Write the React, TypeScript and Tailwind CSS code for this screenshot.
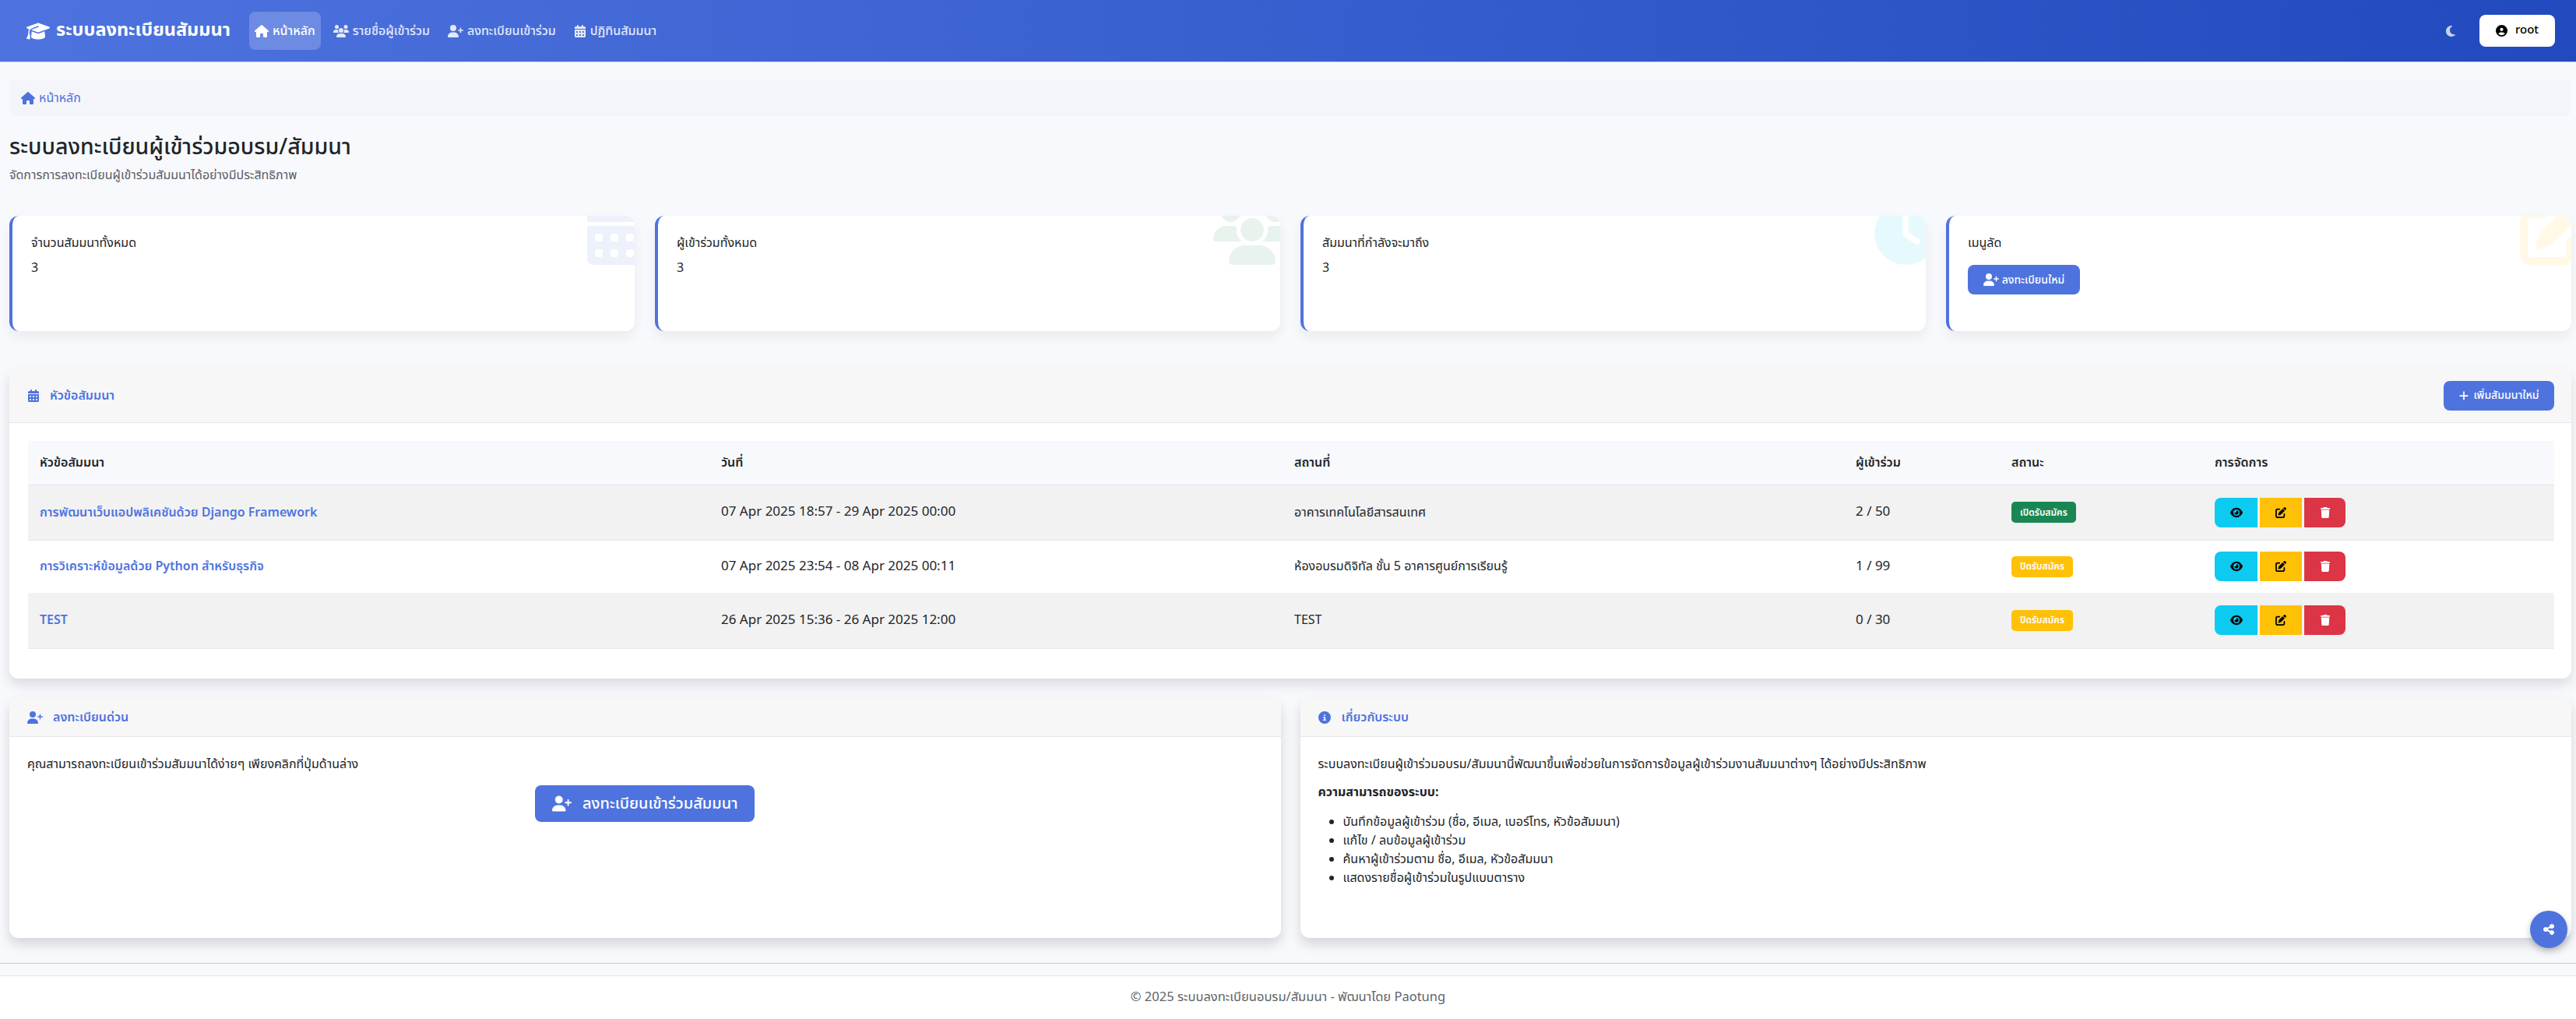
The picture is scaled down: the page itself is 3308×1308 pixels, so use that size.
import React from 'react';
import {
  FaGraduationCap, FaHouse, FaUsers, FaUserPlus, FaCalendarDays, FaMoon, FaCircleUser,
  FaClock, FaPenToSquare, FaEye, FaTrash, FaPlus, FaCircleInfo, FaShareNodes,
} from 'react-icons/fa6';

const seminars = [
  { title: 'การพัฒนาเว็บแอปพลิเคชันด้วย Django Framework', date: '07 Apr 2025 18:57 - 29 Apr 2025 00:00', place: 'อาคารเทคโนโลยีสารสนเทศ', count: '2 / 50', open: true, striped: true, h: 'h-[71px]' },
  { title: 'การวิเคราะห์ข้อมูลด้วย Python สำหรับธุรกิจ', date: '07 Apr 2025 23:54 - 08 Apr 2025 00:11', place: 'ห้องอบรมดิจิทัล ชั้น 5 อาคารศูนย์การเรียนรู้', count: '1 / 99', open: false, striped: false, h: 'h-[68px]' },
  { title: 'TEST', date: '26 Apr 2025 15:36 - 26 Apr 2025 12:00', place: 'TEST', count: '0 / 30', open: false, striped: true, h: 'h-[71px]' },
];

// react-icons draws into a 1em square, so the wide glyphs get a bigger size here
const navItems = [
  { label: 'หน้าหลัก', icon: <FaHouse className="text-[18px]" />, active: true },
  { label: 'รายชื่อผู้เข้าร่วม', icon: <FaUsers className="text-[20px]" />, active: false },
  { label: 'ลงทะเบียนเข้าร่วม', icon: <FaUserPlus className="text-[20px]" />, active: false },
  { label: 'ปฏิทินสัมมนา', icon: <FaCalendarDays className="text-[16px]" />, active: false },
];

const StatCard: React.FC<{ label: string; icon: React.ReactNode; children: React.ReactNode }> = ({ label, icon, children }) => (
  <div className="relative h-[148px] overflow-hidden rounded-[12px] border-l-[4px] border-[#4e73df] bg-white pl-[24px] pt-[23px] shadow-[0_8px_16px_rgba(0,0,0,0.06)]">
    <div className="h-[24px] leading-[24px] text-[#212529]">{label}</div>
    {children}
    {icon}
  </div>
);

const PanelHeader: React.FC<{ icon: React.ReactNode; title: string }> = ({ icon, title }) => (
  <div className="flex h-[50px] items-center border-b border-[#e6e7ea] bg-[#f7f7f8] pl-[23px] font-semibold text-[#4e73df]">
    {icon}
    <span>{title}</span>
  </div>
);

export default function App() {
  return (
    <div className="relative flex min-h-[1308px] flex-col bg-[#f8f9fc] font-['Noto_Sans_Thai','Noto_Sans',sans-serif] text-[16px] text-[#212529]">
      {/* Navbar */}
      <nav className="flex h-[80px] items-center border-b border-[#c5d3f5] bg-gradient-to-r from-[#4e73df] to-[#224abe] pl-[34px] pr-[27px]">
        <div className="flex w-[286px] items-center gap-[8px] text-[23.5px] font-bold text-white">
          <FaGraduationCap className="text-[30px]" />
          <span>ระบบลงทะเบียนสัมมนา</span>
        </div>
        <div className="flex items-center gap-[9px]">
          {navItems.map(item => (
            <div key={item.label} className={`flex h-[49px] items-center gap-[5px] rounded-[8px] px-[7px] font-medium ${item.active ? 'bg-white/20 text-white' : 'text-white/85'}`}>
              {item.icon}
              <span>{item.label}</span>
            </div>
          ))}
        </div>
        <div className="ml-auto flex items-center gap-[29px]">
          <FaMoon className="text-white/75" />
          <div className="flex h-[41px] w-[97px] items-center justify-center gap-[10px] rounded-[8px] bg-white text-[15px] font-medium text-black">
            <FaCircleUser />
            <span>root</span>
          </div>
        </div>
      </nav>

      <main className="pl-[12px] pr-[6px]">
        {/* Breadcrumb */}
        <div className="mt-[22px] flex h-[47px] items-center gap-[5px] rounded-[8px] bg-[#f4f5fa] pl-[15px] text-[#4e73df]">
          <FaHouse className="text-[18px]" />
          <span>หน้าหลัก</span>
        </div>

        <h1 className="mt-[22px] h-[38px] text-[28.5px] font-medium leading-[38px] text-[#212529]">ระบบลงทะเบียนผู้เข้าร่วมอบรม/สัมมนา</h1>
        <p className="mt-[4px] h-[24px] leading-[24px] text-[#5a5c69]">จัดการการลงทะเบียนผู้เข้าร่วมสัมมนาได้อย่างมีประสิทธิภาพ</p>

        {/* Stat cards */}
        <div className="mt-[40px] grid grid-cols-4 gap-[26px]">
          <StatCard label="จำนวนสัมมนาทั้งหมด" icon={<FaCalendarDays className="absolute right-[-14px] top-[-17px] text-[80px] text-[#4e73df]/10" />}>
            <div className="mt-[8px] leading-[24px]">3</div>
          </StatCard>
          <StatCard label="ผู้เข้าร่วมทั้งหมด" icon={<FaUsers className="absolute right-[-14px] top-[-27px] text-[100px] text-[#198754]/10" />}>
            <div className="mt-[8px] leading-[24px]">3</div>
          </StatCard>
          <StatCard label="สัมมนาที่กำลังจะมาถึง" icon={<FaClock className="absolute right-[-14px] top-[-17px] text-[80px] text-[#0dcaf0]/10" />}>
            <div className="mt-[8px] leading-[24px]">3</div>
          </StatCard>
          <StatCard label="เมนูลัด" icon={<FaPenToSquare className="absolute right-[-14px] top-[-17px] text-[80px] text-[#ffc107]/10" />}>
            <button className="mt-[16px] flex h-[38px] w-[144px] items-center justify-center gap-[4px] rounded-[8px] bg-[#4e73df] text-[14px] font-medium text-white">
              <FaUserPlus className="text-[20px]" />
              ลงทะเบียนใหม่
            </button>
          </StatCard>
        </div>

        {/* Seminar table */}
        <section className="mt-[48px] h-[398px] overflow-hidden rounded-[12px] bg-white shadow-[0_8px_16px_rgba(0,0,0,0.12)]">
          <div className="flex h-[70px] items-center justify-between border-b border-[#e6e7ea] bg-[#f7f7f8] pl-[23px] pr-[22px]">
            <div className="flex items-center gap-[13px] font-semibold text-[#4e73df]">
              <FaCalendarDays />
              <span>หัวข้อสัมมนา</span>
            </div>
            <button className="flex h-[38px] w-[142px] items-center justify-center gap-[5px] rounded-[8px] bg-[#4e73df] text-[14px] font-medium text-white">
              <FaPlus className="text-[14px]" />
              เพิ่มสัมมนาใหม่
            </button>
          </div>
          <div className="ml-[24px] mr-[22px] mt-[23px]">
            <table className="w-full table-fixed border-collapse text-left">
              <colgroup>
                <col className="w-[875px]" />
                <col className="w-[736px]" />
                <col className="w-[721px]" />
                <col className="w-[200px]" />
                <col className="w-[261px]" />
                <col />
              </colgroup>
              <thead>
                <tr className="h-[56px] border-b border-[#e3e6f0] bg-[#f8f9fc]">
                  {['หัวข้อสัมมนา', 'วันที่', 'สถานที่', 'ผู้เข้าร่วม', 'สถานะ', 'การจัดการ'].map(h => (
                    <th key={h} className="px-[15px] font-semibold">{h}</th>
                  ))}
                </tr>
              </thead>
              <tbody>
                {seminars.map(s => (
                  <tr key={s.title} className={`${s.h} ${s.striped ? 'border-b border-[#e8e8e8] bg-[#f2f2f2]' : 'bg-white'}`}>
                    <td className="px-[15px] font-semibold text-[#4e73df]">{s.title}</td>
                    <td className="px-[15px] text-[17px]">{s.date}</td>
                    <td className="px-[15px]">{s.place}</td>
                    <td className="px-[15px] text-[17px]">{s.count}</td>
                    <td className="px-[15px]">
                      <span className={`inline-flex h-[27px] items-center rounded-[5px] px-[11px] text-[12px] font-semibold text-white ${s.open ? 'bg-[#198754]' : 'bg-[#ffc107]'}`}>
                        {s.open ? 'เปิดรับสมัคร' : 'ปิดรับสมัคร'}
                      </span>
                    </td>
                    <td className="px-[15px]">
                      <div className="flex gap-[3px]">
                        <button className="flex h-[38px] w-[55px] items-center justify-center rounded-l-[8px] bg-[#0dcaf0] text-black"><FaEye className="text-[16px]" /></button>
                        <button className="flex h-[38px] w-[54px] items-center justify-center bg-[#ffc107] text-black"><FaPenToSquare className="text-[14px]" /></button>
                        <button className="flex h-[38px] w-[53px] items-center justify-center rounded-r-[8px] bg-[#dc3545] text-white"><FaTrash className="text-[14px]" /></button>
                      </div>
                    </td>
                  </tr>
                ))}
              </tbody>
            </table>
          </div>
        </section>

        {/* Bottom panels */}
        <div className="mt-[25px] grid grid-cols-2 gap-[25px]">
          <section className="h-[308px] overflow-hidden rounded-[12px] bg-white shadow-[0_8px_16px_rgba(0,0,0,0.15)]">
            <PanelHeader icon={<FaUserPlus className="mr-[13px] text-[20px]" />} title="ลงทะเบียนด่วน" />
            <div className="px-[23px] pt-[23px]">
              <p className="h-[24px] leading-[24px]">คุณสามารถลงทะเบียนเข้าร่วมสัมมนาได้ง่ายๆ เพียงคลิกที่ปุ่มด้านล่าง</p>
              <div className="mt-[15px] flex justify-center">
                <button className="flex h-[47px] w-[282px] items-center justify-center gap-[14px] rounded-[8px] bg-[#4e73df] text-[20px] font-medium text-white">
                  <FaUserPlus className="text-[25px]" />
                  ลงทะเบียนเข้าร่วมสัมมนา
                </button>
              </div>
            </div>
          </section>
          <section className="h-[308px] overflow-hidden rounded-[12px] bg-white shadow-[0_8px_16px_rgba(0,0,0,0.15)]">
            <PanelHeader icon={<FaCircleInfo className="mr-[14px]" />} title="เกี่ยวกับระบบ" />
            <div className="px-[23px] pt-[23px] leading-[24px]">
              <p>ระบบลงทะเบียนผู้เข้าร่วมอบรม/สัมมนานี้พัฒนาขึ้นเพื่อช่วยในการจัดการข้อมูลผู้เข้าร่วมงานสัมมนาต่างๆ ได้อย่างมีประสิทธิภาพ</p>
              <p className="mt-[12px] font-bold">ความสามารถของระบบ:</p>
              <ul className="mt-[14px] list-disc pl-[32px]">
                <li>บันทึกข้อมูลผู้เข้าร่วม (ชื่อ, อีเมล, เบอร์โทร, หัวข้อสัมมนา)</li>
                <li>แก้ไข / ลบข้อมูลผู้เข้าร่วม</li>
                <li>ค้นหาผู้เข้าร่วมตาม ชื่อ, อีเมล, หัวข้อสัมมนา</li>
                <li>แสดงรายชื่อผู้เข้าร่วมในรูปแบบตาราง</li>
              </ul>
            </div>
          </section>
        </div>
      </main>

      <hr className="mt-[32px] border-t-[1px] border-[#c9cbd0]" />

      <footer className="mt-[15px] flex flex-1 items-center justify-center border-t border-[#e3e6f0] bg-white text-[16.5px] text-[#5f6368]">
        © 2025 ระบบลงทะเบียนอบรม/สัมมนา - พัฒนาโดย Paotung
      </footer>

      {/* Share button */}
      <button className="absolute right-[11px] top-[1169px] flex h-[48px] w-[48px] items-center justify-center rounded-full bg-[#4e73df] text-white shadow-[0_4px_8px_rgba(0,0,0,0.25)]">
        <FaShareNodes className="text-[16px]" />
      </button>
    </div>
  );
}
